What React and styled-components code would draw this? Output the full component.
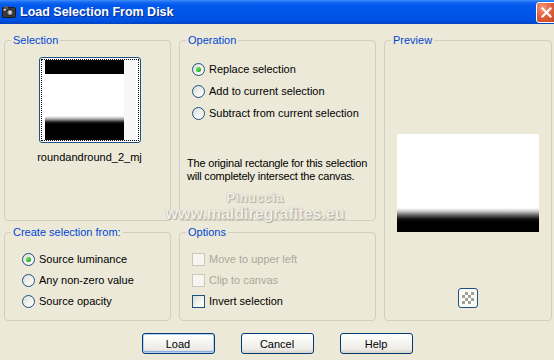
import React from "react";
import styled, { createGlobalStyle } from "styled-components";

const Global = createGlobalStyle`
  html, body { margin: 0; padding: 0; background: #ECE9D8; overflow: hidden; }
  body { font-family: "Liberation Sans", Arial, sans-serif; font-size: 11px; color: #000; }
`;

const Window = styled.div`
  position: relative;
  width: 554px;
  height: 360px;
  background: #ECE9D8;
  overflow: hidden;
`;

const TitleBar = styled.div`
  height: 24px;
  display: flex;
  align-items: center;
  padding-left: 2px;
  background: linear-gradient(
    to bottom,
    #3D8FF5 0px,
    #1A6CF2 2px,
    #0058EE 5px,
    #0056E8 50%,
    #0052E2 85%,
    #0043C4 100%
  );
`;

const TitleIcon = styled.svg`
  width: 14px;
  height: 14px;
  flex: none;
  margin-right: 4px;
`;

const TitleText = styled.div`
  flex: 1;
  color: #fff;
  font-weight: bold;
  font-size: 12.5px;
  line-height: 24px;
  text-shadow: 1px 1px 0 #0A2A8A;
  white-space: nowrap;
`;

const CloseBtn = styled.div`
  width: 21px;
  height: 21px;
  flex: none;
  margin-right: -3px;
  box-sizing: border-box;
  border: 1px solid #fff;
  border-radius: 3px;
  background: radial-gradient(circle at 30% 25%, #F09A7C 0%, #E2613E 45%, #C8401C 100%);
  display: flex;
  align-items: center;
  justify-content: center;
`;

const Body = styled.div`
  display: grid;
  grid-template-columns: 167px 197px 168px;
  grid-template-rows: 187px 95px;
  column-gap: 8px;
  row-gap: 5px;
  padding: 10px 0 0 4px;
`;

const Group = styled.fieldset`
  margin: 0;
  min-width: 0;
  box-sizing: border-box;
  border: 1px solid #D0D0BF;
  border-radius: 4px;
  padding: 0;
  ${(p) => (p.$span ? "grid-column: 3; grid-row: 1 / span 2;" : "")}
`;

const Legend = styled.legend`
  color: #0046D5;
  font-size: 11px;
  line-height: 13px;
  padding: 0 2px;
  margin-left: 6px;
`;

const GroupContent = styled.div`
  display: flex;
  flex-direction: column;
  align-items: ${(p) => p.$align || "flex-start"};
  gap: ${(p) => p.$gap || 0}px;
  padding: ${(p) => p.$pad};
`;

const ThumbButton = styled.div`
  width: 102px;
  height: 86px;
  box-sizing: border-box;
  border: 1px solid #1C5180;
  border-radius: 3px;
  padding: 1px;
  background: #fff;
`;

const FocusRect = styled.div`
  height: 100%;
  box-sizing: border-box;
  border: 1px dotted #000;
  padding: 0 2px 0 3px;
  display: flex;
`;

const ThumbImage = styled.div`
  width: 80px;
  height: 100%;
  background: linear-gradient(
    to bottom,
    #000 0px,
    #000 14px,
    #fff 14px,
    #fff 56px,
    #aaa 59px,
    #222 62px,
    #000 64px
  );
`;

const ThumbStrip = styled.div`
  width: 12px;
  height: 100%;
  background: #F7F7F7;
`;

const Caption = styled.div`
  margin-top: 8px;
  line-height: 13px;
`;

const OptionRow = styled.label`
  display: flex;
  align-items: center;
  gap: 4px;
  height: 13px;
  line-height: 13px;
  white-space: nowrap;
  color: ${(p) => (p.$disabled ? "#ACA899" : "#000")};
`;

const RadioMark = styled.span`
  width: 13px;
  height: 13px;
  flex: none;
  box-sizing: border-box;
  border-radius: 50%;
  border: 1px solid #1C5180;
  background: linear-gradient(135deg, #DCDCD7 0%, #F4F4F0 60%, #FFFFFF 100%);
  display: flex;
  align-items: center;
  justify-content: center;
  &::after {
    content: "";
    width: 5px;
    height: 5px;
    border-radius: 50%;
    background: radial-gradient(circle at 35% 35%, #7CE87C 0%, #2DB42D 55%, #1A8A1A 100%);
    display: ${(p) => (p.$checked ? "block" : "none")};
  }
`;

const CheckMark = styled.span`
  width: 13px;
  height: 13px;
  flex: none;
  box-sizing: border-box;
  border: 1px solid ${(p) => (p.$disabled ? "#CAC8BB" : "#1C5180")};
  background: ${(p) =>
    p.$disabled
      ? "#F6F5F0"
      : "linear-gradient(135deg, #DCDCD7 0%, #F4F4F0 60%, #FFFFFF 100%)"};
`;

const Note = styled.div`
  margin: 28px 0 0 -5px;
  line-height: 13px;
  white-space: nowrap;
  letter-spacing: -0.2px;
`;

const PreviewImage = styled.div`
  width: 142px;
  height: 98px;
  background: linear-gradient(
    to bottom,
    #fff 0px,
    #fff 74px,
    #d0d0d0 77px,
    #666 81px,
    #111 85px,
    #000 88px
  );
`;

const ChkButton = styled.div`
  margin-top: 56px;
  width: 20px;
  height: 20px;
  box-sizing: border-box;
  border: 1px solid #1C5180;
  border-radius: 3px;
  background: #F8F8F4;
  display: flex;
  align-items: center;
  justify-content: center;
`;

const Checker = styled.div`
  width: 12px;
  height: 12px;
  background-color: #fff;
  background-image: linear-gradient(45deg, #A3A196 25%, transparent 25%, transparent 75%, #A3A196 75%),
    linear-gradient(45deg, #A3A196 25%, transparent 25%, transparent 75%, #A3A196 75%);
  background-size: 6px 6px;
  background-position: 0 0, 3px 3px;
`;

const ButtonRow = styled.div`
  display: flex;
  justify-content: center;
  gap: 26px;
  margin-top: 12px;
`;

const Button = styled.button`
  width: 73px;
  height: 21px;
  box-sizing: border-box;
  padding: 0;
  border: 1px solid #003C74;
  border-radius: 3px;
  font-family: "Liberation Sans", Arial, sans-serif;
  font-size: 11px;
  color: #000;
  background: linear-gradient(to bottom, #FFFFFF 0%, #F6F6F3 40%, #ECEBE6 80%, #D8D3C8 100%);
  box-shadow: ${(p) =>
    p.$default ? "inset 0 0 0 1px #B9D1F5, inset 0 -1px 0 1px #8AADE6" : "none"};
`;

const Watermark = styled.div`
  position: absolute;
  left: 163px;
  top: 191px;
  width: 184px;
  text-align: center;
  font-weight: bold;
  color: #F2F0E8;
  text-shadow: 0 0 1px #A29E92, 1px 1px 1px #B0AC9F;
  pointer-events: none;
`;

const WmName = styled.div`
  font-size: 13px;
  line-height: 14px;
  letter-spacing: 0.5px;
`;

const WmUrl = styled.div`
  font-size: 16px;
  line-height: 17px;
`;

function Radio({ checked, children }) {
  return (
    <OptionRow>
      <RadioMark $checked={checked} />
      {children}
    </OptionRow>
  );
}

function Check({ disabled, children }) {
  return (
    <OptionRow $disabled={disabled}>
      <CheckMark $disabled={disabled} />
      {children}
    </OptionRow>
  );
}

export default function App() {
  return (
    <Window>
      <Global />
      <TitleBar>
        <TitleIcon viewBox="0 0 14 14">
          <rect x="0.5" y="2.5" width="13" height="10" rx="1.5" fill="#3b3b3b" stroke="#1a1a1a" />
          <rect x="2" y="1" width="4" height="3" fill="#5a5a5a" />
          <circle cx="8" cy="7.5" r="3.2" fill="#8a8a8a" stroke="#222" />
          <circle cx="8" cy="7.5" r="1.4" fill="#dcdcdc" />
          <rect x="1.5" y="4" width="2.5" height="1.5" fill="#d8d8d8" />
        </TitleIcon>
        <TitleText>Load Selection From Disk</TitleText>
        <CloseBtn>
          <svg width="13" height="13" viewBox="0 0 13 13">
            <path d="M2.5 2.5 L10.5 10.5 M10.5 2.5 L2.5 10.5" stroke="#fff" strokeWidth="2.2" strokeLinecap="square" />
          </svg>
        </CloseBtn>
      </TitleBar>

      <Body>
        <Group>
          <Legend>Selection</Legend>
          <GroupContent $align="center" $pad="10px 0 0 4px">
            <ThumbButton>
              <FocusRect>
                <ThumbImage />
                <ThumbStrip />
              </FocusRect>
            </ThumbButton>
            <Caption>roundandround_2_mj</Caption>
          </GroupContent>
        </Group>

        <Group>
          <Legend>Operation</Legend>
          <GroupContent $gap={9} $pad="16px 0 0 12px">
            <Radio checked>Replace selection</Radio>
            <Radio>Add to current selection</Radio>
            <Radio>Subtract from current selection</Radio>
            <Note>
              The original rectangle for this selection
              <br />
              will completely intersect the canvas.
            </Note>
          </GroupContent>
        </Group>

        <Group $span>
          <Legend>Preview</Legend>
          <GroupContent $align="center" $pad="87px 0 0 0">
            <PreviewImage />
            <ChkButton>
              <Checker />
            </ChkButton>
          </GroupContent>
        </Group>

        <Group>
          <Legend>Create selection from:</Legend>
          <GroupContent $gap={8} $pad="14px 0 0 17px">
            <Radio checked>Source luminance</Radio>
            <Radio>Any non-zero value</Radio>
            <Radio>Source opacity</Radio>
          </GroupContent>
        </Group>

        <Group>
          <Legend>Options</Legend>
          <GroupContent $gap={8} $pad="14px 0 0 12px">
            <Check disabled>Move to upper left</Check>
            <Check disabled>Clip to canvas</Check>
            <Check>Invert selection</Check>
          </GroupContent>
        </Group>
      </Body>

      <ButtonRow>
        <Button $default>Load</Button>
        <Button>Cancel</Button>
        <Button>Help</Button>
      </ButtonRow>

      <Watermark>
        <WmName>Pinuccia</WmName>
        <WmUrl>www.maldiregrafites.eu</WmUrl>
      </Watermark>
    </Window>
  );
}
